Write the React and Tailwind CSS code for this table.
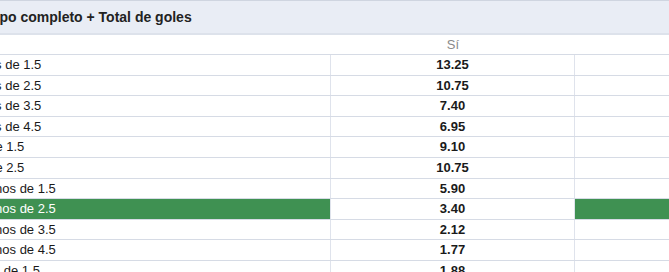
const rows = [
  { label: "Más de 1.5", yes: "13.25", no: "1.05" },
  { label: "Más de 2.5", yes: "10.75", no: "1.06" },
  { label: "Más de 3.5", yes: "7.40", no: "1.10" },
  { label: "Más de 4.5", yes: "6.95", no: "1.11" },
  { label: "+ de 1.5", yes: "9.10", no: "1.07" },
  { label: "+ de 2.5", yes: "10.75", no: "1.06" },
  { label: "Menos de 1.5", yes: "5.90", no: "1.14" },
  { label: "Menos de 2.5", yes: "3.40", no: "1.30", active: true },
  { label: "Menos de 3.5", yes: "2.12", no: "1.70" },
  { label: "Menos de 4.5", yes: "1.77", no: "2.05" },
  { label: "Dos de 1.5", yes: "1.88", no: "1.90" },
];

export default function App() {
  return (
    <div className="w-[669px] h-[272px] overflow-hidden bg-white font-['Liberation_Sans',Arial,sans-serif] text-[13px] text-[#1a1a1a]">
      <div className="-ml-[40px] w-[860px]">
        <div className="h-[35px] border-t border-b-2 border-t-[#cfd5e0] border-b-[#dde2eb] bg-[#e9edf5] flex items-center pl-[7px]">
          <span className="text-[14px] font-bold text-[#222]">
            Tiempo completo + Total de goles
          </span>
        </div>
        <div className="grid grid-cols-[371px_244px_244px] h-[19px] items-center text-[#8a8a8a]">
          <span />
          <span className="text-center">Sí</span>
          <span className="text-center">No</span>
        </div>
        {rows.map((row) => (
          <div
            key={row.label}
            className="grid grid-cols-[371px_244px_244px] h-[20.6px] border-t border-[#d6dbe5]"
          >
            <div
              className={`flex items-center pl-[17px] border-r border-[#dfe3ec] ${
                row.active ? "bg-[#3f9152] text-white" : ""
              }`}
            >
              {row.label}
            </div>
            <div className="flex items-center justify-center font-bold border-r border-[#dfe3ec]">
              {row.yes}
            </div>
            <div
              className={`flex items-center justify-center font-bold border-r border-[#dfe3ec] ${
                row.active ? "bg-[#3f9152] text-white" : ""
              }`}
            >
              {row.no}
            </div>
          </div>
        ))}
      </div>
    </div>
  );
}
